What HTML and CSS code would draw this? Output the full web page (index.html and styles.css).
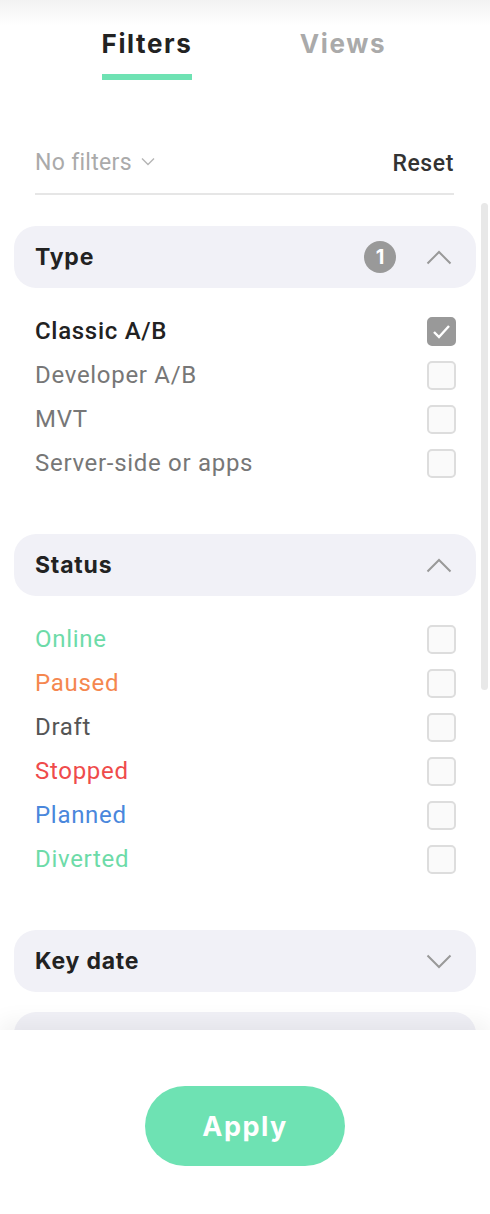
FILE: index.html
```html
<!DOCTYPE html>
<html lang="en">
  <head>
    <title>Filters</title>
    <meta charset="UTF-8" />
    <meta name="viewport" content="width=device-width, initial-scale=1.0" />
    <link rel="stylesheet" href="styles.css">
  </head>

  <body>
    <div class="panel">
      <!-- Tabs -->
      <nav class="tabs">
        <div class="tab"><span class="tab-label active">Filters</span></div>
        <div class="tab"><span class="tab-label">Views</span></div>
      </nav>

      <div class="toolbar">
        <span class="saved">No filters
          <svg class="saved-caret" width="14" height="9" viewBox="0 0 14 9">
            <polyline points="1,1.5 7,7.5 13,1.5" />
          </svg>
        </span>
        <button class="reset">Reset</button>
      </div>

      <div class="scroll">
        <div class="scroll-thumb"></div>

        <section class="group">
          <div class="group-head">
            <span class="group-title">Type</span>
            <span class="badge">1</span>
            <svg class="chevron" width="26" height="15" viewBox="0 0 26 15">
              <polyline points="1.5,13.5 13,2 24.5,13.5" />
            </svg>
          </div>
          <ul class="options">
            <li class="option selected">
              <span>Classic A/B</span>
              <span class="check checked">
                <svg width="19" height="15" viewBox="0 0 19 15">
                  <polyline points="2,8 7,13 17,2" />
                </svg>
              </span>
            </li>
            <li class="option"><span>Developer A/B</span><span class="check"></span></li>
            <li class="option"><span>MVT</span><span class="check"></span></li>
            <li class="option"><span>Server-side or apps</span><span class="check"></span></li>
          </ul>
        </section>

        <section class="group">
          <div class="group-head">
            <span class="group-title">Status</span>
            <svg class="chevron" width="26" height="15" viewBox="0 0 26 15">
              <polyline points="1.5,13.5 13,2 24.5,13.5" />
            </svg>
          </div>
          <ul class="options">
            <li class="option status-online"><span>Online</span><span class="check"></span></li>
            <li class="option status-paused"><span>Paused</span><span class="check"></span></li>
            <li class="option status-draft"><span>Draft</span><span class="check"></span></li>
            <li class="option status-stopped"><span>Stopped</span><span class="check"></span></li>
            <li class="option status-planned"><span>Planned</span><span class="check"></span></li>
            <li class="option status-diverted"><span>Diverted</span><span class="check"></span></li>
          </ul>
        </section>

        <section class="group collapsed">
          <div class="group-head">
            <span class="group-title">Key date</span>
            <svg class="chevron" width="26" height="15" viewBox="0 0 26 15">
              <polyline points="1.5,1.5 13,13 24.5,1.5" />
            </svg>
          </div>
        </section>

        <!-- next group, hidden under the footer -->
        <section class="group collapsed">
          <div class="group-head"></div>
        </section>
      </div>

      <footer class="footer">
        <button class="apply">Apply</button>
      </footer>
    </div>
  </body>
</html>
```

FILE: styles.css
```css
:root {
  --color-bg: #ffffff;
  --color-text: #222222;
  --color-muted: #777777;
  --color-faint: #aaaaaa;
  --color-green: #6ee2b3;
  --color-head: #f1f1f7;
  --color-icon: #999999;
  --color-border: #e6e6e6;
  --heading-font: Inter, "Open Sans", sans-serif;
}

* {
  box-sizing: border-box;
}

body {
  margin: 0;
  font-family: Roboto, "Liberation Sans", sans-serif;
  background-color: var(--color-bg);
  color: var(--color-text);
}

.panel {
  display: flex;
  flex-direction: column;
  height: 1214px;
  overflow: hidden;
}

/* Tabs */
.tabs {
  display: flex;
  justify-content: center;
  padding-top: 28px;
  background: linear-gradient(#f2f2f2, #ffffff 26px);
}

.tab {
  width: 196px;
  text-align: center;
}

.tab-label {
  display: inline-block;
  font-family: var(--heading-font);
  font-weight: 700;
  font-size: 26px;
  line-height: 32px;
  letter-spacing: 1.6px;
  color: var(--color-faint);
  padding-bottom: 14px;
  border-bottom: 6px solid transparent;
}

.tab-label.active {
  color: var(--color-text);
  border-bottom-color: var(--color-green);
}

/* Toolbar */
.toolbar {
  display: flex;
  justify-content: space-between;
  align-items: center;
  margin: 68px 36px 0 35px;
  padding-bottom: 15px;
  border-bottom: 2px solid var(--color-border);
  line-height: 30px;
}

.saved {
  font-size: 23px;
  letter-spacing: 0.3px;
  color: var(--color-faint);
}

.saved-caret {
  margin-left: 3px;
  vertical-align: 4px;
}

.saved-caret polyline {
  fill: none;
  stroke: #b5b5b5;
  stroke-width: 1.4;
}

.reset {
  border: none;
  background: none;
  padding: 0;
  font-family: inherit;
  font-size: 23px;
  font-weight: 500;
  letter-spacing: 0.6px;
  color: #333333;
}

/* Scrolling list */
.scroll {
  position: relative;
  flex: 1;
  overflow: hidden;
  padding-top: 31px;
}

.scroll-thumb {
  position: absolute;
  top: 8px;
  right: 2px;
  width: 7px;
  height: 487px;
  border-radius: 4px;
  background-color: #e8e8e8;
}

.group {
  margin: 0 14px;
}

.group.collapsed {
  margin-bottom: 20px;
}

.group-head {
  display: flex;
  align-items: center;
  height: 62px;
  padding: 0 24px 0 21px;
  border-radius: 22px;
  background-color: var(--color-head);
}

.group-title {
  flex: 1;
  font-family: var(--heading-font);
  font-weight: 700;
  font-size: 23px;
  letter-spacing: 0.8px;
}

.badge {
  width: 32px;
  height: 32px;
  margin-right: 30px;
  border-radius: 50%;
  background-color: var(--color-icon);
  color: #ffffff;
  font-family: var(--heading-font);
  font-weight: 700;
  font-size: 20px;
  line-height: 32px;
  text-align: center;
}

.chevron polyline {
  fill: none;
  stroke: var(--color-icon);
  stroke-width: 2;
}

.options {
  list-style: none;
  margin: 0;
  padding: 21px 20px 49px 21px;
}

.option {
  display: flex;
  justify-content: space-between;
  align-items: center;
  height: 44px;
  font-size: 24px;
  letter-spacing: 0.7px;
  color: var(--color-muted);
}

.option.selected {
  color: var(--color-text);
  font-weight: 500;
}

.check {
  display: flex;
  align-items: center;
  justify-content: center;
  width: 29px;
  height: 29px;
  border: 2px solid #dddddd;
  border-radius: 5px;
  background-color: #fafafa;
}

.check.checked {
  border-color: var(--color-icon);
  background-color: var(--color-icon);
}

.check polyline {
  fill: none;
  stroke: #ffffff;
  stroke-width: 2.4;
}

.status-online,
.status-diverted {
  color: #6ddba8;
}

.status-paused {
  color: #f5874f;
}

.status-draft {
  color: #555555;
}

.status-stopped {
  color: #ef4b4b;
}

.status-planned {
  color: #4a87dc;
}

/* Footer */
.footer {
  position: relative;
  height: 184px;
  padding-top: 56px;
  text-align: center;
  background-color: var(--color-bg);
  box-shadow: 0 -8px 22px rgba(0, 0, 0, 0.06);
}

.apply {
  width: 200px;
  height: 80px;
  border: none;
  border-radius: 40px;
  background-color: var(--color-green);
  color: #ffffff;
  font-family: var(--heading-font);
  font-weight: 700;
  font-size: 27px;
  letter-spacing: 1.5px;
}
```
